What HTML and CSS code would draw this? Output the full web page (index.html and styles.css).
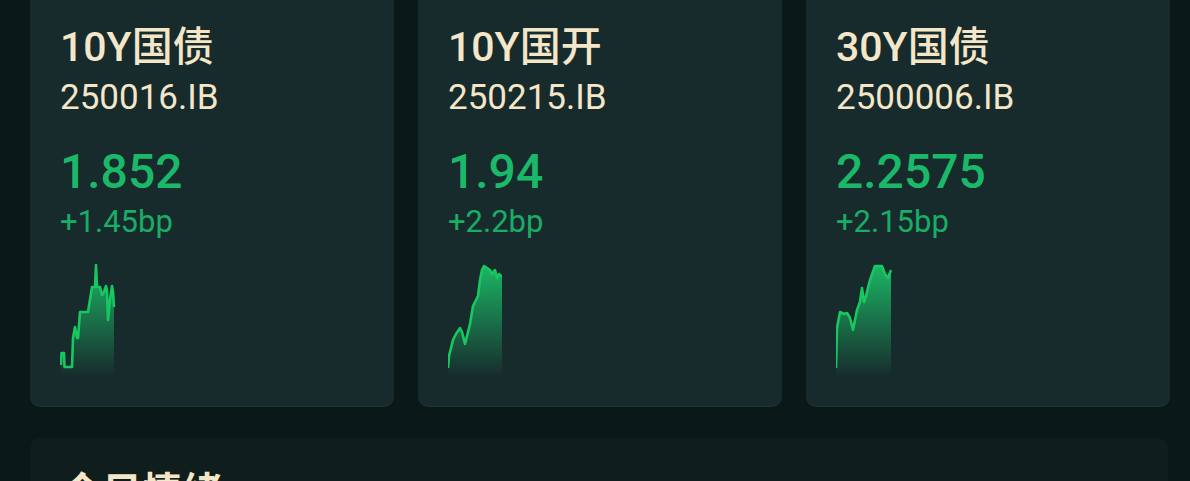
FILE: index.html
```html
<!DOCTYPE html>
<html lang="zh-CN">

<head>
    <meta charset="UTF-8">
    <meta name="viewport" content="width=device-width, initial-scale=1.0">
    <title>债券行情</title>
    <link rel="stylesheet" href="styles.css">
</head>

<body>

    <div class="page">
        <div class="cards">
            <div class="card">
                <div class="bond-name">10Y国债</div>
                <div class="bond-code">250016.IB</div>
                <div class="bond-yield">1.852</div>
                <div class="bond-change">+1.45bp</div>
                <svg class="spark" width="56" height="116" viewBox="0 0 56 116">
                    <defs>
                        <linearGradient id="fill1" x1="0" y1="0" x2="0" y2="1">
                            <stop offset="0" stop-color="#1cc46a" stop-opacity="0.9" />
                            <stop offset="1" stop-color="#1cc46a" stop-opacity="0" />
                        </linearGradient>
                    </defs>
                    <polygon fill="url(#fill1)" points="1,103 1.5,91 4,91 4.5,105 12,105 13,76 15,65 17,76 18,76 20,50 25,50 28,50 32,25 35,25 36,3 37,25 40,25 42,33 44,30 46,24 47,28 48,58 50,38 52,24 53,30 54,45 54,116 1,116" />
                    <polyline class="spark-line" points="1,103 1.5,91 4,91 4.5,105 12,105 13,76 15,65 17,76 18,76 20,50 25,50 28,50 32,25 35,25 36,3 37,25 40,25 42,33 44,30 46,24 47,28 48,58 50,38 52,24 53,30 54,45" />
                </svg>
            </div>

            <div class="card">
                <div class="bond-name">10Y国开</div>
                <div class="bond-code">250215.IB</div>
                <div class="bond-yield">1.94</div>
                <div class="bond-change">+2.2bp</div>
                <svg class="spark" width="56" height="116" viewBox="0 0 56 116">
                    <defs>
                        <linearGradient id="fill2" x1="0" y1="0" x2="0" y2="1">
                            <stop offset="0" stop-color="#1cc46a" stop-opacity="0.9" />
                            <stop offset="1" stop-color="#1cc46a" stop-opacity="0" />
                        </linearGradient>
                    </defs>
                    <polygon fill="url(#fill2)" points="0,106 1,94 3,86 5,78 8,72 12,66 14,70 17,82 20,70 22,62 25,44 28,38 30,34 32,18 34,8 36,4 39,6 42,8 44,12 47,8 49,16 51,12 53,14 54,14 54,116 0,116" />
                    <polyline class="spark-line" points="0,106 1,94 3,86 5,78 8,72 12,66 14,70 17,82 20,70 22,62 25,44 28,38 30,34 32,18 34,8 36,4 39,6 42,8 44,12 47,8 49,16 51,12 53,14 54,14" />
                </svg>
            </div>

            <div class="card">
                <div class="bond-name">30Y国债</div>
                <div class="bond-code">2500006.IB</div>
                <div class="bond-yield">2.2575</div>
                <div class="bond-change">+2.15bp</div>
                <svg class="spark" width="56" height="116" viewBox="0 0 56 116">
                    <defs>
                        <linearGradient id="fill3" x1="0" y1="0" x2="0" y2="1">
                            <stop offset="0" stop-color="#1cc46a" stop-opacity="0.9" />
                            <stop offset="1" stop-color="#1cc46a" stop-opacity="0" />
                        </linearGradient>
                    </defs>
                    <polygon fill="url(#fill3)" points="0,106 1,66 4,50 8,52 11,51 14,56 17,68 21,48 24,40 26,26 28,40 30,34 34,18 39,4 46,4 49,12 52,16 55,8 55,116 0,116" />
                    <polyline class="spark-line" points="0,106 1,66 4,50 8,52 11,51 14,56 17,68 21,48 24,40 26,26 28,40 30,34 34,18 39,4 46,4 49,12 52,16 55,8" />
                </svg>
            </div>
        </div>

        <div class="panel">
            <div class="panel-title">今日情绪</div>
        </div>
    </div>

</body>

</html>
```

FILE: styles.css
```css
/* General Styles */
body {
    margin: 0;
    background-color: #0b1818;
    font-family: Roboto, "Noto Sans CJK SC", sans-serif;
    color: #f4e6c8;
    overflow: hidden;
}

.page {
    padding: 0 20px 0 30px;
}

.cards {
    display: grid;
    grid-template-columns: repeat(3, 1fr);
    gap: 24px;
    margin-top: -10px;
}

.card {
    background-color: #172a2c;
    border-radius: 10px;
    padding: 33px 30px 29px;
    box-shadow: inset 0 -1px 0 rgba(255, 255, 255, 0.04);
}

.bond-name {
    font-size: 41px;
    line-height: 48px;
    font-weight: 500;
}

.bond-code {
    margin-top: 6px;
    font-size: 35px;
    line-height: 42px;
}

.bond-yield {
    margin-top: 26px;
    font-size: 48px;
    line-height: 54px;
    font-weight: 500;
    color: #1bb86a;
}

.bond-change {
    margin-top: 5px;
    font-size: 31px;
    line-height: 36px;
    color: #19ad65;
}

.spark {
    display: block;
    margin-top: 22px;
}

.spark-line {
    fill: none;
    stroke: #17c860;
    stroke-width: 2.6;
    stroke-linejoin: round;
}

.panel {
    margin-top: 31px;
    margin-right: 2px;
    height: 200px;
    background-color: #0f1d1d;
    border-radius: 10px;
    padding: 31px 32px 0;
}

.panel-title {
    font-size: 40px;
    line-height: 48px;
    font-weight: 700;
}
```
